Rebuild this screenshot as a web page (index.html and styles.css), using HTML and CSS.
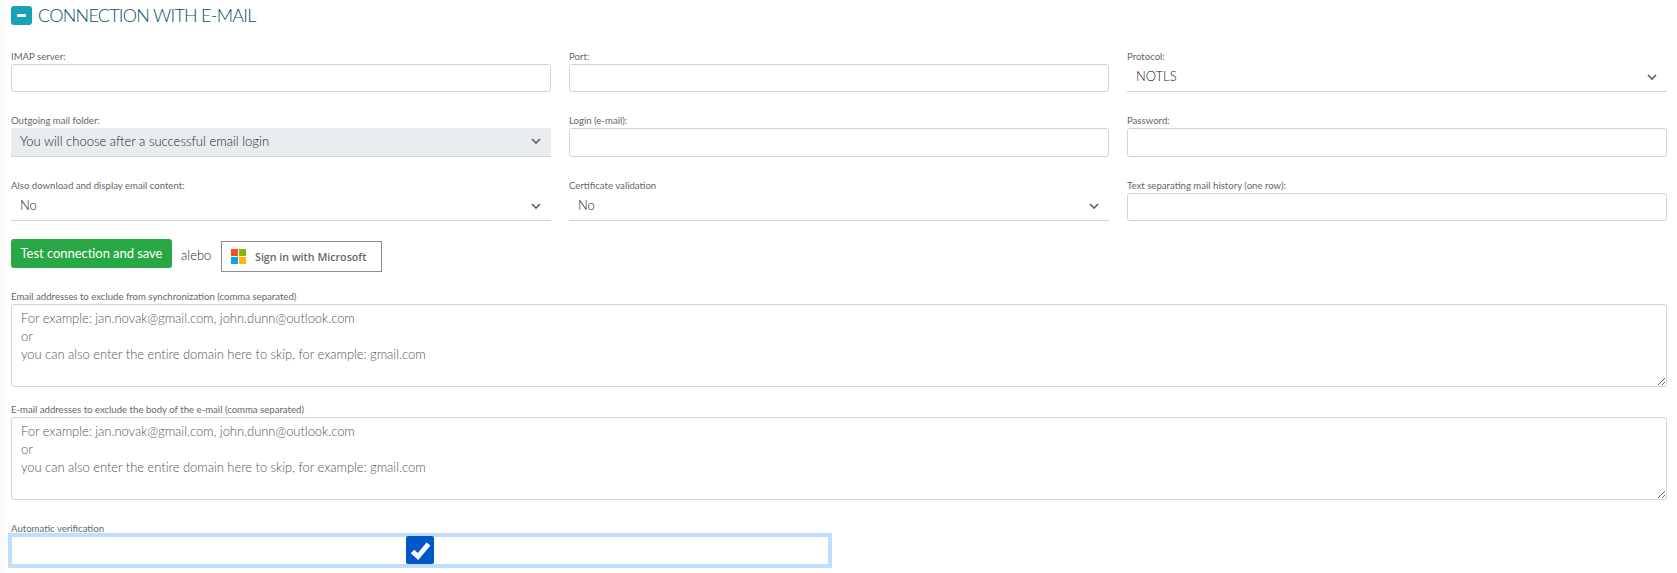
FILE: index.html
```html
<!DOCTYPE html>
<html lang="en">
<head>
<meta charset="utf-8">
<title>Connection with e-mail</title>
<link rel="stylesheet" href="styles.css">
</head>
<body>
<main class="panel">
  <h2 class="heading">
    <span class="toggle"><span class="toggle-bar"></span></span>
    <span class="heading-text">CONNECTION WITH E-MAIL</span>
  </h2>
  <div class="fields">
    <div class="field">
      <label class="label">IMAP server:</label>
      <input class="input" type="text">
    </div>
    <div class="field">
      <label class="label">Port:</label>
      <input class="input" type="text">
    </div>
    <div class="field">
      <label class="label">Protocol:</label>
      <div class="select"><span class="select-text">NOTLS</span>
        <svg class="chevron" viewBox="0 0 10 6"><path d="M1 1l4 4 4-4" fill="none" stroke="#5a6268" stroke-width="1.7"/></svg></div>
    </div>
    <div class="field">
      <label class="label">Outgoing mail folder:</label>
      <div class="select select-tall select-disabled"><span class="select-text">You will choose after a successful email login</span>
        <svg class="chevron" viewBox="0 0 10 6"><path d="M1 1l4 4 4-4" fill="none" stroke="#5a6268" stroke-width="1.7"/></svg></div>
    </div>
    <div class="field">
      <label class="label">Login (e-mail):</label>
      <input class="input input-tall" type="text">
    </div>
    <div class="field">
      <label class="label">Password:</label>
      <input class="input input-tall" type="password">
    </div>
    <div class="field">
      <label class="label">Also download and display email content:</label>
      <div class="select"><span class="select-text">No</span>
        <svg class="chevron" viewBox="0 0 10 6"><path d="M1 1l4 4 4-4" fill="none" stroke="#5a6268" stroke-width="1.7"/></svg></div>
    </div>
    <div class="field">
      <label class="label">Certificate validation</label>
      <div class="select"><span class="select-text">No</span>
        <svg class="chevron" viewBox="0 0 10 6"><path d="M1 1l4 4 4-4" fill="none" stroke="#5a6268" stroke-width="1.7"/></svg></div>
    </div>
    <div class="field">
      <label class="label">Text separating mail history (one row):</label>
      <input class="input" type="text">
    </div>
  </div>
  <div class="actions">
    <button class="btn-save" type="button">Test connection and save</button>
    <span class="or">alebo</span>
    <button class="btn-ms" type="button">
      <svg class="ms-logo" viewBox="0 0 15 15">
        <rect width="7" height="7" fill="#f25022"/>
        <rect x="8" width="7" height="7" fill="#7fba00"/>
        <rect y="8" width="7" height="7" fill="#00a4ef"/>
        <rect x="8" y="8" width="7" height="7" fill="#ffb900"/>
      </svg>
      Sign in with Microsoft
    </button>
  </div>
  <div class="field area-field">
    <label class="label">Email addresses to exclude from synchronization (comma separated)</label>
    <textarea class="area" placeholder="For example: jan.novak@gmail.com, john.dunn@outlook.com&#10;or&#10;you can also enter the entire domain here to skip, for example: gmail.com"></textarea>
  </div>
  <div class="field area-field">
    <label class="label">E-mail addresses to exclude the body of the e-mail (comma separated)</label>
    <textarea class="area" placeholder="For example: jan.novak@gmail.com, john.dunn@outlook.com&#10;or&#10;you can also enter the entire domain here to skip, for example: gmail.com"></textarea>
  </div>
  <div class="field check-field">
    <label class="label">Automatic verification</label>
    <div class="check-wrap">
      <span class="check-box">
        <svg viewBox="0 0 28 28" class="check-mark"><path d="M6.5 15.5l5.5 5L22.5 8" fill="none" stroke="#fff" stroke-width="5"/></svg>
      </span>
    </div>
  </div>
</main>
</body>
</html>
```
FILE: styles.css
```css
* { box-sizing: border-box; }
html, body { margin: 0; padding: 0; }
body {
  background: #fff;
  font-family: "Lato", "Liberation Sans", sans-serif;
  color: #495057;
  width: 1677px;
  height: 573px;
  overflow: hidden;
}
.panel {
  padding: 6px 10px 0 11px;
  background: linear-gradient(90deg, #f8f8f8 0, #fff 8px);
  height: 100%;
}
.heading {
  display: flex;
  align-items: center;
  gap: 6px;
  margin: 0;
  height: 19px;
  font-size: 18px;
  font-weight: 300;
  letter-spacing: -0.75px;
  color: #04505f;
}
.heading-text { margin-top: -2px; }
.toggle {
  width: 21px;
  height: 19px;
  background: #17a2b8;
  border-radius: 3px;
  display: flex;
  align-items: center;
  justify-content: center;
}
.toggle-bar { width: 9px; height: 3px; background: #fff; border-radius: 1px; }
.fields {
  display: grid;
  grid-template-columns: repeat(3, 540px);
  grid-template-rows: 64px 65px 60px;
  column-gap: 18px;
  margin-top: 25px;
}
.field { display: flex; flex-direction: column; }
.label {
  display: block;
  height: 14px;
  font-size: 9.6px;
  line-height: 14px;
  font-weight: 400;
  color: #62686d;
  white-space: nowrap;
}
.input {
  display: block;
  width: 100%;
  height: 28px;
  border: 1px solid #ced4da;
  border-radius: 3px;
  background: #fff;
  outline: none;
}
.input-tall { height: 29px; }
.select {
  position: relative;
  display: flex;
  align-items: center;
  height: 28px;
  padding: 0 0 3px 9px;
  border-bottom: 1px solid #ced4da;
  font-size: 13px;
  font-weight: 300;
  color: #1f2428;
}
.select-tall { height: 29px; }
.select-disabled { background: #e9ecef; }
.chevron { position: absolute; right: 10px; top: 10px; width: 10px; height: 6px; }
.actions {
  display: flex;
  align-items: flex-start;
}
.btn-save {
  width: 161px;
  height: 29px;
  padding: 0 0 2px;
  border: 0;
  border-radius: 3px;
  background: #28a745;
  color: #fff;
  font: 400 13px "Lato", sans-serif;
  letter-spacing: -0.05px;
}
.or { width: 49px; padding: 8px 0 0 9px; font-size: 13px; font-weight: 300; line-height: 17px; color: #1f2428; }
.btn-ms {
  display: flex;
  align-items: center;
  gap: 9px;
  width: 161px;
  height: 31px;
  margin-top: 2px;
  padding: 0 0 0 9px;
  border: 1px solid #8c8c8c;
  background: #fff;
  color: #666;
  font: 600 10.7px "Open Sans", sans-serif;
}
.ms-logo { width: 15px; height: 15px; }
.actions + .area-field { margin-top: 18px; }
.area-field + .area-field { margin-top: 16px; }
.area {
  display: block;
  width: 100%;
  height: 83px;
  padding: 4px 9px;
  border: 1px solid #ced4da;
  border-radius: 3px;
  font: 300 13px/18px "Lato", sans-serif;
  letter-spacing: -0.05px;
  color: #495057;
  outline: none;
}
.area::placeholder { color: #50575d; opacity: 1; }
.check-field { margin-top: 22px; }
.check-field .label { height: 11px; }
.check-wrap {
  width: 824px;
  height: 35px;
  margin-left: -3px;
  border: 4px solid #bfdeff;
  display: flex;
  align-items: flex-end;
  justify-content: center;
  background: #fff;
}
.check-box {
  display: block;
  flex: none;
  width: 28px;
  height: 28px;
  background: #0058c7;
  border-radius: 2px;
}
.check-mark { display: block; width: 28px; height: 28px; }
```
